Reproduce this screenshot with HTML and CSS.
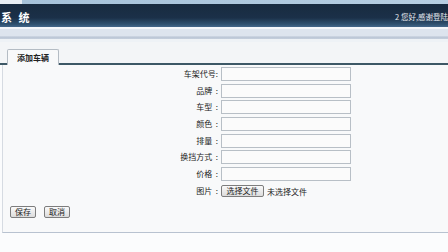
FILE: index.html
```html
<!DOCTYPE html>
<html lang="zh-CN">
<head>
  <meta charset="UTF-8">
  <title>添加车辆</title>
  <link rel="stylesheet" href="styles.css">
</head>
<body>
  <div class="top-strip"></div>
  <div class="header">
    <div class="logo">系 统</div>
    <div class="user">2 您好,感谢登陆</div>
  </div>
  <div class="subbar"></div>

  <div class="tabs">
    <div class="tab">添加车辆</div>
  </div>

  <div class="panel">
    <form class="car-form">
      <label>车架代号:</label><input type="text">
      <label>品牌&nbsp; :</label><input type="text">
      <label>车型&nbsp; :</label><input type="text">
      <label>颜色&nbsp; :</label><input type="text">
      <label>排量&nbsp; :</label><input type="text">
      <label>换挡方式&nbsp; :</label><input type="text">
      <label>价格&nbsp; :</label><input type="text">
      <label>图片&nbsp; :</label>
      <div class="file-row">
        <span class="btn file-btn">选择文件</span>
        <span class="file-name">未选择文件</span>
      </div>
    </form>

    <div class="actions">
      <button class="btn">保存</button>
      <button class="btn">取消</button>
    </div>
  </div>
</body>
</html>
```

FILE: styles.css
```css
body {
  margin: 0;
  background: #fbfcfd;
  font-family: "Noto Sans CJK SC", "Liberation Sans", sans-serif;
  font-size: 8px;
  color: #222;
  overflow: hidden;
}

.top-strip {
  height: 4px;
  background: linear-gradient(to right, #e8eef4 0, #e8eef4 22px, #a6c2da 22px, #b6cee2 100%);
}

.header {
  height: 23px;
  display: flex;
  align-items: center;
  justify-content: space-between;
  padding-left: 1px;
  background: linear-gradient(to bottom, #182b40 0, #1b3048 60%, #2f5170 88%, #44678a 100%);
  overflow: hidden;
}

.logo {
  color: #fff;
  font-family: "Noto Sans CJK SC", serif;
  font-weight: bold;
  font-size: 11px;
  letter-spacing: 2px;
  margin-top: 2px;
}

.user {
  color: #e4e8ee;
  font-size: 7.5px;
  white-space: nowrap;
  margin-top: 2px;
}

.subbar {
  height: 13px;
  border-top: 2px solid #f4f6fa;
  background: linear-gradient(to bottom, #dde4ee 0, #dde4ee 55%, #b9c4d4 60%, #c4cedc 75%, #eef2f6 80%, #eef2f6 100%);
}

.tabs {
  height: 21px;
  display: flex;
  align-items: flex-end;
  padding-left: 7px;
  background: #f3f5f7;
  border-bottom: 2px solid #3d5866;
}

.tab {
  width: 50px;
  height: 15px;
  margin-bottom: -2px;
  background: #f8f9fa;
  border: 1px solid #b4bcc4;
  border-bottom: none;
  border-radius: 2px 2px 0 0;
  font-weight: bold;
  text-align: center;
  line-height: 15px;
}

.panel {
  margin-left: 2px;
  padding: 2px 0 14px 7px;
  border-left: 1px solid #d6dbe2;
  border-bottom: 1px solid #b8c2d0;
  background: #f8f9fa;
  box-shadow: 0 3px 0 #eef1f5;
}

.car-form {
  display: grid;
  grid-template-columns: 208px 130px;
  column-gap: 3px;
  row-gap: 2.7px;
  align-items: center;
}

.car-form label {
  text-align: right;
  color: #222;
  line-height: 14px;
}

.car-form input {
  height: 14px;
  box-sizing: border-box;
  margin: 0;
  border: 1px solid #b8bfc6;
  background: #fbfbfb;
}

.file-row {
  display: flex;
  align-items: center;
  gap: 3px;
  padding-top: 1px;
}

.btn {
  display: inline-block;
  box-sizing: border-box;
  height: 12px;
  padding: 0 4px;
  border: 1px solid #7d7d7d;
  border-radius: 2px;
  background: linear-gradient(to bottom, #fafafa, #dcdcdc);
  font-family: inherit;
  font-size: 8px;
  line-height: 10px;
  color: #222;
}

.file-btn {
  width: 43px;
  text-align: center;
  padding: 0;
}

.actions {
  display: flex;
  gap: 8px;
  margin-top: 8px;
}

.actions .btn {
  width: 26px;
  padding: 0;
}
```
